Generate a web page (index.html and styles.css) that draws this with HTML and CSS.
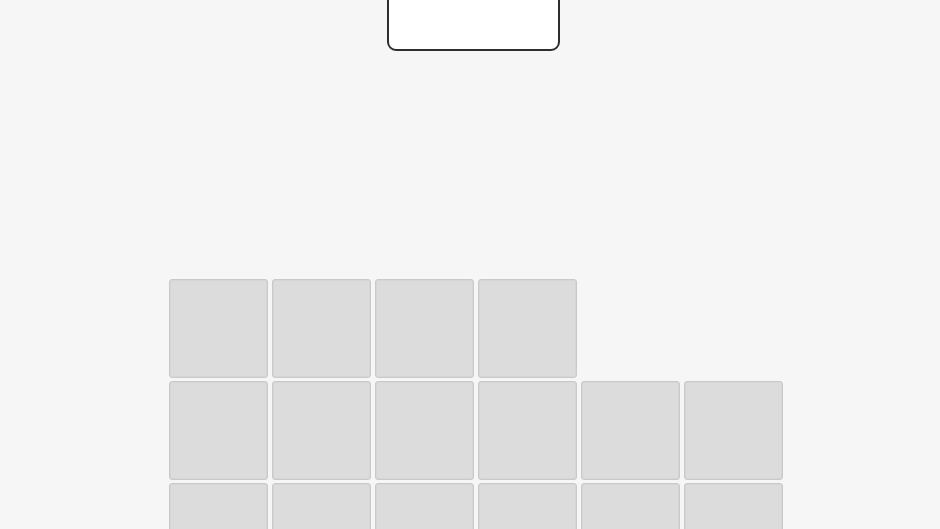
FILE: index.html
```
<!DOCTYPE html>
<html>
<head>
<meta charset="utf-8">
<link rel="stylesheet" href="styles.css">
</head>
<body>
<div class="stage">
  <div class="preview"></div>
  <div class="board">
    <div class="tile"></div><div class="tile"></div><div class="tile"></div><div class="tile"></div><div class="empty"></div><div class="empty"></div>
    <div class="tile"></div><div class="tile"></div><div class="tile"></div><div class="tile"></div><div class="tile"></div><div class="tile"></div>
    <div class="tile"></div><div class="tile"></div><div class="tile"></div><div class="tile"></div><div class="tile"></div><div class="tile"></div>
  </div>
</div>
</body>
</html>
```
FILE: styles.css
```
html, body {
  margin: 0;
  padding: 0;
  background: #f6f6f6;
  overflow: hidden;
  height: 100%;
}
.stage {
  display: flex;
  flex-direction: column;
  font-family: "Liberation Sans", Arial, sans-serif;
}
.preview {
  margin-top: -12px;
  margin-left: 387px;
  width: 169px;
  height: 59px;
  background: #ffffff;
  border: 2px solid #2e2e2e;
  border-radius: 9px;
}
.board {
  margin-top: 228px;
  margin-left: 169px;
  display: grid;
  grid-template-columns: repeat(6, 99px);
  grid-auto-rows: 99px;
  column-gap: 4px;
  row-gap: 3px;
}
.tile {
  box-sizing: border-box;
  background: #dcdcdc;
  border: 1px solid #c9c9c9;
  border-radius: 3px;
  box-shadow: inset 0 0 0 1px #d6d6d6;
}
```
